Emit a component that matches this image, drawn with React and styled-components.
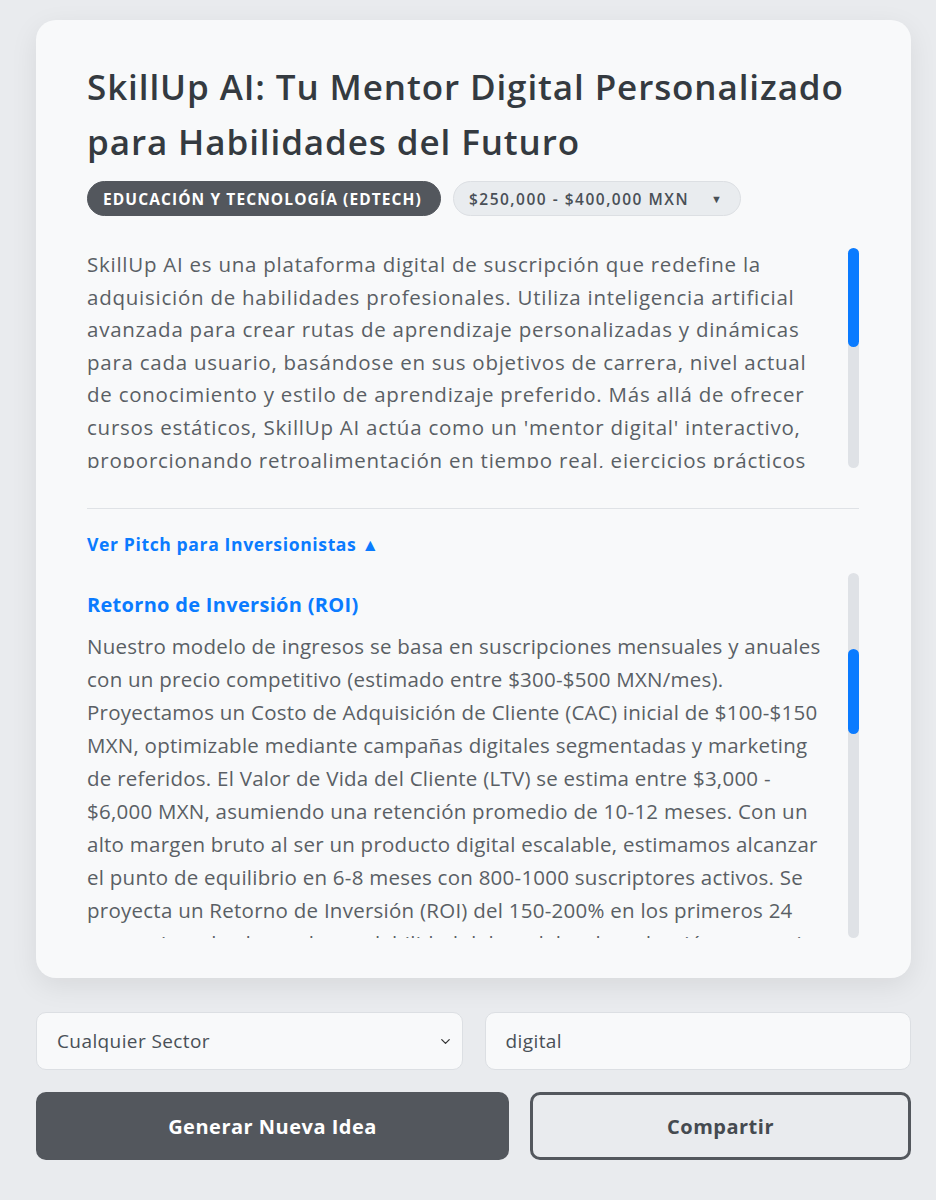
import React, { useLayoutEffect, useRef, useState } from 'react'
import styled, { createGlobalStyle } from 'styled-components'
import { ChevronDown } from 'lucide-react'

const GlobalStyle = createGlobalStyle`
  * { box-sizing: border-box; }
  body {
    margin: 0;
    background: #e9ebee;
    font-family: 'Open Sans', 'Noto Sans', sans-serif;
    color: #343a40;
  }
`

const Page = styled.div`
  padding: 20px 25px 40px 36px;
`

const Wrapper = styled.div`
  width: 875px;
  display: flex;
  flex-direction: column;
`

const Card = styled.div`
  background: #f8f9fa;
  border-radius: 20px;
  box-shadow: 0 8px 28px rgba(0, 0, 0, 0.08);
  padding: 39px 52px 40px 51px;
  display: flex;
  flex-direction: column;
`

const Title = styled.h1`
  margin: 0 0 9px;
  font-size: 35px;
  line-height: 55px;
  font-weight: 600;
  letter-spacing: 0.9px;
  color: #343a40;
`

const TagRow = styled.div`
  display: flex;
  column-gap: 12px;
  margin-top: 3px;
`

const Tag = styled.span`
  display: inline-flex;
  align-items: center;
  height: 35px;
  padding: 0 18px 0 15px;
  border-radius: 18px;
  font-size: 15.5px;
  font-weight: ${({ dark }) => (dark ? 700 : 600)};
  letter-spacing: ${({ dark }) => (dark ? 1.1 : 1.5)}px;
  text-transform: uppercase;
  background: ${({ dark }) => (dark ? '#53575d' : '#e9ecef')};
  color: ${({ dark }) => (dark ? '#ffffff' : '#495057')};
  border: 1px solid ${({ dark }) => (dark ? '#53575d' : '#dcdfe3')};
`

const Caret = styled.span`
  font-size: 11px;
  margin-left: 22px;
  letter-spacing: 0;
`

const ScrollRow = styled.div`
  display: flex;
  height: ${({ h }) => h}px;
`

const Viewport = styled.div`
  position: relative;
  flex: 1;
  overflow: hidden;
  padding-right: 12px;
`

const Track = styled.div`
  flex: none;
  width: 11px;
  background: #dfe2e6;
  border-radius: 6px;
  display: flex;
  flex-direction: column;
`

const Thumb = styled.div`
  width: 11px;
  border-radius: 6px;
  background: #0a7bff;
`

const Description = styled.p`
  margin: 0;
  font-size: 20.5px;
  line-height: 32.6px;
  letter-spacing: 0.75px;
  color: #5a5f65;
`

const Divider = styled.hr`
  border: none;
  border-top: 1px solid #dfe2e6;
  margin: 40px 0 0;
`

const Toggle = styled.button`
  align-self: flex-start;
  background: none;
  border: none;
  padding: 0;
  margin: 22px 0 16px;
  font-family: inherit;
  font-size: 17.6px;
  line-height: 26px;
  font-weight: 700;
  letter-spacing: 0.6px;
  color: #0a7bff;
  cursor: pointer;
`

const Section = styled.div`
  padding-top: 17px;
`

const SectionTitle = styled.h4`
  margin: 0 0 10px;
  font-size: 20px;
  line-height: 30px;
  font-weight: 700;
  letter-spacing: 0.3px;
  color: #0a7bff;
`

const SectionText = styled.p`
  margin: 0 0 8px;
  font-size: 20.5px;
  line-height: 33px;
  letter-spacing: 0.25px;
  color: #5a5f65;
`

const ControlRow = styled.div`
  display: grid;
  grid-template-columns: 1fr 1fr;
  column-gap: 22px;
  margin-top: 34px;
`

const Field = styled.div`
  display: flex;
  align-items: center;
  height: 58px;
  padding: 0 9px 0 0;
  border: 1px solid #dcdfe3;
  border-radius: 10px;
  background: #f8f9fa;
  color: #333;
`

const Select = styled.select`
  flex: 1;
  height: 100%;
  appearance: none;
  border: none;
  background: transparent;
  padding: 0 0 0 20px;
  font-family: inherit;
  font-size: 19px;
  letter-spacing: 0.4px;
  color: #495057;
  outline: none;
`

const Input = styled.input`
  height: 58px;
  padding: 0 20px;
  border: 1px solid #dcdfe3;
  border-radius: 10px;
  background: #f8f9fa;
  font-family: inherit;
  font-size: 19px;
  letter-spacing: 0.4px;
  color: #495057;
  outline: none;
`

const ButtonRow = styled.div`
  display: grid;
  grid-template-columns: 473fr 381fr;
  column-gap: 21px;
  margin-top: 22px;
`

const Button = styled.button`
  height: 68px;
  border-radius: 10px;
  font-family: inherit;
  font-size: 20px;
  font-weight: 700;
  letter-spacing: 0.5px;
  cursor: pointer;
  background: ${({ outline }) => (outline ? 'transparent' : '#53575d')};
  color: ${({ outline }) => (outline ? '#454a50' : '#ffffff')};
  border: 3px solid #53575d;
`

// scroll box with a drawn scrollbar (headless screenshots hide native ones)
const ScrollArea = ({ height, scrollTo, children }) => {
  const viewRef = useRef(null)
  const [thumb, setThumb] = useState({ top: 0, size: height })

  useLayoutEffect(() => {
    const view = viewRef.current
    if (scrollTo && scrollTo.current) view.scrollTop = scrollTo.current.offsetTop
    const ratio = view.clientHeight / view.scrollHeight
    setThumb({ top: view.scrollTop * ratio, size: view.clientHeight * ratio })
  }, [])

  return (
    <ScrollRow h={height}>
      <Viewport ref={viewRef}>{children}</Viewport>
      <Track>
        <Thumb style={{ marginTop: thumb.top, height: thumb.size }} />
      </Track>
    </ScrollRow>
  )
}

const description = `SkillUp AI es una plataforma digital de suscripción que redefine la adquisición de habilidades profesionales. Utiliza inteligencia artificial avanzada para crear rutas de aprendizaje personalizadas y dinámicas para cada usuario, basándose en sus objetivos de carrera, nivel actual de conocimiento y estilo de aprendizaje preferido. Más allá de ofrecer cursos estáticos, SkillUp AI actúa como un 'mentor digital' interactivo, proporcionando retroalimentación en tiempo real, ejercicios prácticos adaptativos y simulaciones de escenarios laborales reales. La plataforma se enfoca en habilidades de alta demanda como ciencia de datos, desarrollo de software, marketing digital y diseño UX/UI, además de habilidades blandas como liderazgo y comunicación efectiva, conectando a los usuarios con oportunidades laborales acordes a su progreso. Gracias a su sistema de seguimiento inteligente, cada usuario recibe métricas claras sobre su avance y recomendaciones semanales para mantenerse motivado y alcanzar sus metas en menos tiempo.`

const pitch = [
  {
    id: 'mercado',
    title: 'Oportunidad de Mercado',
    text: 'El mercado de educación en línea en México y Latinoamérica crece a tasas superiores al 15% anual, impulsado por la transformación digital y la creciente demanda de talento calificado. Más del 60% de los profesionales considera que necesita actualizar sus habilidades en los próximos dos años, pero las plataformas actuales ofrecen contenidos genéricos y sin acompañamiento personalizado. SkillUp AI atiende esta brecha con una propuesta accesible, relevante y enfocada en resultados laborales medibles para cada usuario.',
  },
  {
    id: 'roi',
    title: 'Retorno de Inversión (ROI)',
    text: 'Nuestro modelo de ingresos se basa en suscripciones mensuales y anuales con un precio competitivo (estimado entre $300-$500 MXN/mes). Proyectamos un Costo de Adquisición de Cliente (CAC) inicial de $100-$150 MXN, optimizable mediante campañas digitales segmentadas y marketing de referidos. El Valor de Vida del Cliente (LTV) se estima entre $3,000 - $6,000 MXN, asumiendo una retención promedio de 10-12 meses. Con un alto margen bruto al ser un producto digital escalable, estimamos alcanzar el punto de equilibrio en 6-8 meses con 800-1000 suscriptores activos. Se proyecta un Retorno de Inversión (ROI) del 150-200% en los primeros 24 meses, impulsado por la escalabilidad del modelo y la reducción progresiva del CAC.',
  },
  {
    id: 'fondos',
    title: 'Uso de Fondos',
    text: 'La inversión solicitada se destinará en un 40% al desarrollo del motor de inteligencia artificial y la plataforma, 30% a marketing y adquisición de usuarios, 20% a la creación de contenido con expertos de la industria y 10% a gastos operativos y legales durante el primer año de operación.',
  },
  {
    id: 'ventaja',
    title: 'Ventaja Competitiva',
    text: 'A diferencia de las plataformas tradicionales, SkillUp AI combina personalización profunda, contenido adaptado al contexto laboral mexicano y un acompañamiento continuo que aumenta las tasas de finalización y la empleabilidad de sus usuarios.',
  },
  {
    id: 'crecimiento',
    title: 'Estrategia de Crecimiento',
    text: 'Planeamos expandirnos a Colombia, Chile y Perú en el segundo año, además de ofrecer licencias corporativas a empresas que buscan capacitar a sus equipos de forma medible y eficiente.',
  },
  {
    id: 'equipo',
    title: 'Equipo',
    text: 'El equipo fundador combina experiencia en inteligencia artificial, diseño instruccional y crecimiento de productos digitales, con trayectoria en startups de tecnología y educación en México.',
  },
  {
    id: 'pasos',
    title: 'Próximos Pasos',
    text: 'Buscamos socios estratégicos que compartan nuestra visión.',
  },
]

const App = () => {
  const roiRef = useRef(null)

  return (
    <>
      <GlobalStyle />
      <Page>
        <Wrapper>
          <Card>
            <Title>SkillUp AI: Tu Mentor Digital Personalizado para Habilidades del Futuro</Title>
            <TagRow>
              <Tag dark>Educación y Tecnología (EdTech)</Tag>
              <Tag>
                $250,000 - $400,000 MXN<Caret>▼</Caret>
              </Tag>
            </TagRow>
            <div style={{ marginTop: 32 }}>
              <ScrollArea height={220}>
                <Description>{description}</Description>
              </ScrollArea>
            </div>
            <Divider />
            <Toggle>Ver Pitch para Inversionistas ▲</Toggle>
            <ScrollArea height={365} scrollTo={roiRef}>
              {pitch.map((s) => (
                <Section key={s.id} ref={s.id === 'roi' ? roiRef : null}>
                  <SectionTitle>{s.title}</SectionTitle>
                  <SectionText>{s.text}</SectionText>
                </Section>
              ))}
            </ScrollArea>
          </Card>
          <ControlRow>
            <Field>
              <Select defaultValue="any">
                <option value="any">Cualquier Sector</option>
                <option value="edtech">Educación y Tecnología</option>
              </Select>
              <ChevronDown size={15} strokeWidth={2} />
            </Field>
            <Input defaultValue="digital" />
          </ControlRow>
          <ButtonRow>
            <Button>Generar Nueva Idea</Button>
            <Button outline>Compartir</Button>
          </ButtonRow>
        </Wrapper>
      </Page>
    </>
  )
}

export default App
